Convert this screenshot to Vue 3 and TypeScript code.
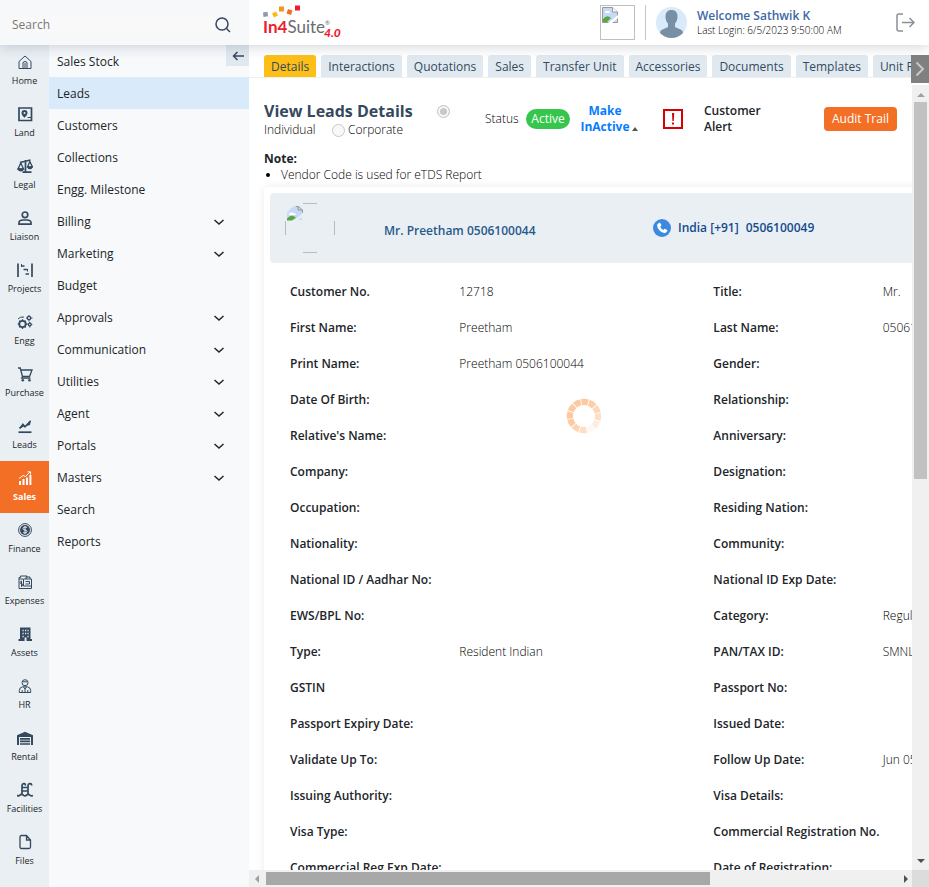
<script setup lang="ts">
import { ref } from 'vue'

interface RailItem { name: string; icon: string }
interface MenuItem { name: string; children?: boolean }
interface Field { label: string; value?: string }

const modules: RailItem[] = [
  { name: 'Home', icon: '<path class="l" d="M2 7.500 8 2l6 5.500V14.500H2zM6 14.500V9q0-1.500 2-1.500T10 9v5.500M8 9v5"/>' },
  { name: 'Land', icon: '<path class="l w" d="M2 2h12.500v12.500H2z"/><path d="M7.500 4a3 3 0 0 1 3 3c0 2-3 4.800-3 4.800S4.500 9 4.500 7a3 3 0 0 1 3-3z"/><circle cx="7.500" cy="6.900" r="1" fill="#e9eff3"/><path class="l" d="M10.500 11.500H14"/>' },
  { name: 'Legal', icon: '<path class="l w" d="M3 4.500 13.500 2M8.500 2v12M5.500 14.200h9"/><path class="l m" d="M3.800 5 1 11h5.600zM12.800 3.500l-2.300 5.500h5z"/><path d="M.5 10.500h6.600q-.6 3-3.300 3T.5 10.500zM10 8.500h5.800q-.5 2.700-2.900 2.700T10 8.500z"/>' },
  { name: 'Liaison', icon: '<circle class="l w" cx="8" cy="4.800" r="2.800"/><path class="l w" d="M2 14.200v-1.500q0-2.700 4-2.700h4q4 0 4 2.700v1.500z"/>' },
  { name: 'Projects', icon: '<path class="l w" d="M1 1.500v13.500M15 1.500v13.500M4 4h3.500M6.500 7.500h4M8.500 12h3.500"/><path class="l" d="M4.500 2v3M10.500 7v2.500"/>' },
  { name: 'Engg', icon: '<circle class="l w" cx="5.500" cy="10" r="3.200"/><path class="l m" d="M5.500 5.300v1.500M5.500 13v2M.8 10h1.700M8.500 10h2M2.200 6.700l1.100 1.200M7.600 12.200l1.200 1.200M2.200 13.300l1.100-1.200M7.600 7.800l1.200-1.100"/><path class="l" d="M1 5q2-2.500 6-2"/><circle class="l m" cx="12" cy="4" r="1.700"/><circle class="l m" cx="12.800" cy="10.500" r="1.400"/><path class="l" d="M12 1v1M12 6v1.500M9 4h1M14 4h1.500M12.800 8v1M12.800 12v1.500M10.800 10.500h.8M14.300 10.500h1"/>' },
  { name: 'Purchase', icon: '<path class="l m" d="M1 2h2.200l2.300 8.500h7L15 4H4M5.500 10.500l-.8 1.700h8.800"/><circle cx="5.800" cy="14.200" r="1.300"/><circle cx="12.400" cy="14.200" r="1.300"/>' },
  { name: 'Leads', icon: '<path class="l w" d="M1.500 14.200h13"/><path class="l w" d="M2.500 10.500 6 6.500l2 2.300L13.500 3"/><path d="M5.500 5.200 7.500 8l-4 2.500zM9.500 8l4.500-6-1 5z"/>' },
  { name: 'Sales', icon: '<path d="M2 11h2v4H2zM5.500 9h2v6h-2zM9 7.500h2V15H9zM12.400 5h2v10h-2z"/><path class="l" d="M2 8.500 6 5.500l2.500 1L13 2M10.500 1.800h3v2.700"/>' },
  { name: 'Finance', icon: '<circle class="l" cx="8" cy="8" r="6.400"/><circle cx="8" cy="8" r="5"/><path d="M10 5.800Q9.500 5 8 5 6 5 6 6.500T8 8t2 1.500T8 11q-1.500 0-2-.8M8 4v8" fill="none" stroke="#e9eff3"/>' },
  { name: 'Expenses', icon: '<path class="l" d="M2 3.500h1.500V2H10v1.500M2 3.500v11h12.500V12M2 5h4M6.500 5h8v7h-8zM9 5V3h4v2M4.500 7.500q-1.500 0-1.500 1t1.500 1.200Q6 10 6 11t-1.500 1M4.500 6.800v6M8.500 7.500h4v2.500h-4"/>' },
  { name: 'Assets', icon: '<path d="M3 1.500h10.500v11.500H15v2H1.500v-2H3z"/><path d="M5.500 3.700h1.200v1.500H5.500zM8 3.700h1.200v1.500H8zM10.400 3.700h1.200v1.500h-1.200zM5.500 6.700h1.200v1.500H5.500zM8 6.700h1.200v1.500H8zM10.400 6.700h1.200v1.500h-1.200zM5.500 9.700h1.200v1.500H5.500zM10.400 9.700h1.200v1.500h-1.200zM7.600 11.500h1.900V15H7.600z" fill="#e9eff3"/>' },
  { name: 'HR', icon: '<circle class="l" cx="8" cy="4.700" r="3"/><path class="l" d="M2.300 14.500v-2q0-3 3.200-3.700h5q3.200.7 3.200 3.700v2zM5.200 14v-2M10.800 14v-2M6.500 9 8 11l1.500-2M8 11v3M6 3.800h4"/>' },
  { name: 'Rental', icon: '<path d="M0 5.200 8 1.700l8 3.500V15h-2V7H2v8H0z"/><path class="l w" d="M3 8.800h10M3 11.400h10M3 14h10"/>' },
  { name: 'Facilities', icon: '<path class="l w" d="M5 12V4q0-2.300 2-2.300T8 3.500M11 12V4q0-2.300 2-2.300T14.500 3.500M5 5.500h6M5 9h6"/><path class="l w" d="M0 13.200q1.500 1.500 3 0t3.300 0 3.300 0 3.300 0 3 0"/>' },
  { name: 'Files', icon: '<path class="l m" d="M3 3q0-1.500 1.500-1.500h5L13.500 6v7q0 1.500-1.500 1.500H4.500Q3 14.500 3 13zM9.500 1.500V6h4"/>' },
]

const menu: MenuItem[] = [
  { name: 'Sales Stock' }, { name: 'Leads' }, { name: 'Customers' }, { name: 'Collections' },
  { name: 'Engg. Milestone' }, { name: 'Billing', children: true }, { name: 'Marketing', children: true },
  { name: 'Budget' }, { name: 'Approvals', children: true }, { name: 'Communication', children: true },
  { name: 'Utilities', children: true }, { name: 'Agent', children: true }, { name: 'Portals', children: true },
  { name: 'Masters', children: true }, { name: 'Search' }, { name: 'Reports' },
]

const tabs: string[] = ['Details', 'Interactions', 'Quotations', 'Sales', 'Transfer Unit', 'Accessories', 'Documents', 'Templates', 'Unit Rate']

const fields: Field[] = [
  { label: 'Customer No.', value: '12718' }, { label: 'Title:', value: 'Mr.' },
  { label: 'First Name:', value: 'Preetham' }, { label: 'Last Name:', value: '0506100044' },
  { label: 'Print Name:', value: 'Preetham 0506100044' }, { label: 'Gender:' },
  { label: 'Date Of Birth:' }, { label: 'Relationship:' },
  { label: "Relative's Name:" }, { label: 'Anniversary:' },
  { label: 'Company:' }, { label: 'Designation:' },
  { label: 'Occupation:' }, { label: 'Residing Nation:' },
  { label: 'Nationality:' }, { label: 'Community:' },
  { label: 'National ID / Aadhar No:' }, { label: 'National ID Exp Date:' },
  { label: 'EWS/BPL No:' }, { label: 'Category:', value: 'Regular' },
  { label: 'Type:', value: 'Resident Indian' }, { label: 'PAN/TAX ID:', value: 'SMNL' },
  { label: 'GSTIN' }, { label: 'Passport No:' },
  { label: 'Passport Expiry Date:' }, { label: 'Issued Date:' },
  { label: 'Validate Up To:' }, { label: 'Follow Up Date:', value: 'Jun 05' },
  { label: 'Issuing Authority:' }, { label: 'Visa Details:' },
  { label: 'Visa Type:' }, { label: 'Commercial Registration No.' },
  { label: 'Commercial Reg Exp Date:' }, { label: 'Date of Registration:' },
]

const activeModule = ref('Sales')
const activeMenu = ref('Leads')
const activeTab = ref('Details')
const leadType = ref('individual')
const segments = [0.15, 0.6, 0.8, 1, 1, 1, 1, 1, 0.9, 0.75, 0.6, 0.35].map((opacity, i) => ({
  angle: i * 30 + 50,
  opacity,
}))
</script>

<template>
  <div class="app">
    <header class="topbar">
      <div class="search">
        <input type="text" placeholder="Search" aria-label="Search" />
        <button type="button" aria-label="Run search">
          <svg width="16" height="16" viewBox="0 0 16 16"><circle cx="7" cy="7" r="6" /><path d="m11.500 11.500 3.500 3.500" /></svg>
        </button>
      </div>
      <div class="brandbar">
        <a class="logo" href="#">
          <svg width="60" height="14" viewBox="0 0 60 14">
            <path fill="#8d99ae" d="m0 7.500 4.500-.7.500 4.500-4.500.7z" />
            <path fill="#fdb913" d="m9 8.500 4-2 2 4-4 2z" />
            <path fill="#f7941d" d="M16 1.500h5v5h-5z" />
            <path fill="#f36f21" d="m25 4 4.500 1.500L28 10l-4.500-1.500z" />
            <path fill="#ee1c2e" d="M32 .5h5v5h-5z" />
          </svg>
          <span class="logo-text"><b>In4</b>Suite<sup>®</sup><em>4.0</em></span>
        </a>
        <div class="user">
          <span class="company-pic">
            <svg width="16" height="16" viewBox="0 0 16 16"><path fill="#c6d9f5" stroke="#999" d="M.5.500h10L15.500 5v10.500H.5z" /><path fill="#fff" stroke="#999" d="M10.500.5V5h5" /><path fill="#fff" d="M3 5q1-2 3-1 2 .2 2 2H3z" /><path fill="#57a83a" d="M1 15V12q4-5 8-1l-4 4z" /><path fill="#fff" d="m6 16 10-8v3l-6 5z" /></svg>
          </span>
          <span class="rule"></span>
          <svg class="avatar" width="31" height="31" viewBox="0 0 31 31"><circle cx="15.500" cy="15.500" r="15.500" fill="#d9eafb" /><path fill="#7890a4" d="M15.500 3c4 0 6 2.500 6 6.500 0 3-1 5.500-2.500 7v3.500l6.500 3q1.500.8 1.500 3Q22 31 15.500 31T4 26q0-2.200 1.500-3l6.500-3v-3.500c-1.500-1.500-2.500-4-2.500-7 0-4 2-6.500 6-6.500z" /></svg>
          <div class="welcome">
            <strong>Welcome Sathwik K</strong>
            <span>Last Login: 6/5/2023 9:50:00 AM</span>
          </div>
          <button class="logout" type="button" aria-label="Log out">
            <svg width="20" height="20" viewBox="0 0 20 20"><path d="M8 1H4Q2 1 2 3v13q0 2 2 2h4M7 9.500h12M14.500 5 19 9.500 14.500 14" /></svg>
          </button>
        </div>
      </div>
    </header>

    <div class="body">
      <nav class="rail" aria-label="Modules">
        <a v-for="m in modules" :key="m.name" href="#" :class="{ on: m.name === activeModule }" @click.prevent="activeModule = m.name">
          <svg width="16" height="16" viewBox="0 0 16 16" v-html="m.icon"></svg>
          <span>{{ m.name }}</span>
        </a>
      </nav>

      <nav class="menu" aria-label="Sales menu">
        <button class="collapse" type="button" aria-label="Collapse menu">
          <svg width="12" height="10" viewBox="0 0 12 10"><path d="M12 5H1.500M5.500 1l-4 4 4 4" /></svg>
        </button>
        <a v-for="m in menu" :key="m.name" href="#" :class="{ on: m.name === activeMenu }" @click.prevent="activeMenu = m.name">
          {{ m.name }}
          <svg v-if="m.children" width="10" height="7" viewBox="0 0 10 7"><path d="m.5 1 4.500 4 4.500-4" /></svg>
        </a>
      </nav>

      <main class="main">
        <div class="tabrow">
          <div class="tabs" role="tablist">
            <button v-for="t in tabs" :key="t" type="button" role="tab" :aria-selected="t === activeTab" :class="{ on: t === activeTab }" @click="activeTab = t">{{ t }}</button>
          </div>
          <button class="next" type="button" aria-label="More tabs">
            <svg width="10" height="16" viewBox="0 0 10 16"><path d="m1.500 1.500 6.500 6.500-6.500 6.500" /></svg>
          </button>
        </div>

        <div class="pane">
          <div class="view">
            <div class="headrow">
              <fieldset class="kind">
                <h1>View Leads Details</h1>
                <input id="individual" v-model="leadType" type="radio" name="kind" value="individual" />
                <label for="individual">Individual</label>
                <span class="corp">
                  <input id="corporate" v-model="leadType" type="radio" name="kind" value="corporate" />
                  <label for="corporate">Corporate</label>
                </span>
              </fieldset>
              <span class="status">Status</span>
              <span class="pill">Active</span>
              <a class="toggle" href="#">Make<br />InActive <i></i></a>
              <svg class="alert" width="20" height="20" viewBox="0 0 20 20"><path fill="#fff" stroke="#d80000" stroke-width="2" d="M1 1h18v18H1z" /><path fill="#d80000" d="M9 4h2.200l-.4 8H9.400zM9 13.500h2v2H9z" /></svg>
              <strong class="custalert">Customer<br />Alert</strong>
              <button class="audit" type="button">Audit Trail</button>
            </div>

            <div class="note">
              <strong>Note:</strong>
              <ul><li>Vendor Code is used for eTDS Report</li></ul>
            </div>

            <section class="card">
              <div class="banner">
                <span class="photo">
                  <svg width="50" height="50" viewBox="0 0 50 50"><path fill="none" stroke="#bbb" d="M18 .5h14M18 49.500h14M.5 18v14M49.500 18v14" /><path fill="#c6d9f5" d="M2 17V10q2-4 7-7h4l4 4v10z" /><path fill="#fff" d="M4 11q2-3 4-1 3 0 3 2H4z" /><path fill="none" stroke="#999" d="M11 3.500h2.500L17.500 7v3M13 3.500V7h4.500" /><path fill="#57a83a" d="M2 17.500v-2q4-5 9-1l-4 3z" /><path fill="#eaeff3" d="m8 18 9-7v3l-5 4z" /></svg>
                </span>
                <strong class="who">Mr. Preetham 0506100044</strong>
                <a class="phone" href="#">
                  <svg width="18" height="18" viewBox="0 0 18 18"><circle cx="9" cy="9" r="9" fill="#3b8ae0" /><path fill="#fff" d="M4.500 5.200 6.200 3.800q.6-.3 1 .3l1.100 1.900q.3.600-.2 1l-.9.800q1 2.400 3.200 3.300l.9-1q.4-.4 1-.1l1.800 1q.6.400.2 1l-1.200 1.600q-.8.700-2 .4-6-1.600-7-7.300-.1-.9.400-1.500z" /></svg>
                  <span>India [+91]</span><span>0506100049</span>
                </a>
              </div>
              <dl class="fields">
                <template v-for="f in fields" :key="f.label">
                  <dt>{{ f.label }}</dt>
                  <dd>{{ f.value }}</dd>
                </template>
              </dl>
            </section>
          </div>

          <div class="bar vertical" aria-hidden="true"><i class="up"></i><span></span><i class="down"></i></div>
          <div class="bar horizontal" aria-hidden="true"><i class="left"></i><span></span><i class="right"></i></div>
          <div class="corner"></div>

          <svg class="spinner" width="36" height="36" viewBox="-18 -18 36 36" role="img" aria-label="Loading">
            <path v-for="s in segments" :key="s.angle" :transform="`rotate(${s.angle})`" :opacity="s.opacity" d="M17.200 0A17.200 17.200 0 0 1 15.400 7.700L9.800 4.900A11 11 0 0 0 11 0z" />
          </svg>
        </div>
      </main>
    </div>
  </div>
</template>

<style>
body {
  margin: 0;
}
</style>

<style scoped>
.app {
  display: flex;
  flex-direction: column;
  height: 100vh;
  overflow: hidden;
  background: #fff;
  color: #212529;
  font: 12px/16px "Open Sans", "Noto Sans", sans-serif;
}
.app * {
  box-sizing: border-box;
}
button,
input {
  font: inherit;
  color: inherit;
}
button {
  padding: 0;
  border: 0;
  background: none;
}
a {
  color: inherit;
  text-decoration: none;
}
svg {
  display: block;
  flex: none;
  fill: none;
}

/* Top bar */
.topbar {
  position: relative;
  z-index: 2;
  display: flex;
  flex: none;
  height: 45px;
  box-shadow: 0 2px 12px rgba(50, 70, 95, 0.22);
}
.search {
  display: flex;
  align-items: center;
  width: 249px;
  padding: 4px 18px 0 12px;
  background: #f7f8fa;
}
.search input {
  flex: 1;
  min-width: 0;
  padding: 0;
  border: 0;
  outline: 0;
  background: #f9f9f9;
}
.search input::placeholder {
  color: #777;
}
.search svg {
  stroke: #34495e;
  stroke-width: 1.5;
}
.brandbar {
  display: flex;
  flex: 1;
  justify-content: space-between;
  padding: 0 14px;
  background: #fff;
}
.logo {
  padding-top: 5px;
}
.logo-text {
  display: flex;
  align-items: center;
  height: 16px;
  color: #6a6c70;
  font: 17px/16px Lato, sans-serif;
}
.logo-text b {
  color: #ee1c2e;
}
.logo-text sup {
  align-self: flex-start;
  font-size: 6px;
  line-height: 8px;
}
.logo-text em {
  align-self: flex-end;
  margin-bottom: -6px;
  margin-left: -6px;
  color: #ee1c2e;
  font-size: 12px;
  font-weight: 900;
}
.user {
  display: flex;
  align-items: center;
}
.company-pic {
  width: 35px;
  height: 35px;
  padding: 1px;
  border: 1px solid #c0c0c0;
}
.rule {
  width: 1px;
  height: 35px;
  margin: 0 10px;
  background: #c4c4c4;
}
.welcome {
  display: flex;
  flex-direction: column;
  width: 208px;
  padding: 1px 0 0 10px;
  font-size: 10px;
  line-height: 14px;
  white-space: nowrap;
}
.welcome strong {
  color: #3d68a5;
  font-size: 12px;
  font-weight: 600;
}
.welcome span {
  color: #000;
  font-weight: 300;
}
.logout svg {
  stroke: #8a8f98;
  stroke-width: 1.5;
}

/* Side navigation */
.body {
  display: flex;
  flex: 1;
  min-height: 0;
}
.rail {
  flex: none;
  width: 49px;
  background: #e9eff3;
  overflow: hidden;
}
.rail a {
  display: flex;
  flex-direction: column;
  align-items: center;
  gap: 3px;
  height: 52px;
  padding-top: 9px;
  font-size: 9px;
  font-weight: 500;
  line-height: 16px;
}
.rail svg {
  fill: #34495e;
  color: #34495e;
}
.rail svg :deep(.l) {
  fill: none;
  stroke: currentColor;
  stroke-width: 1;
}
.rail svg :deep(.m) {
  stroke-width: 1.3;
}
.rail svg :deep(.w) {
  stroke-width: 1.7;
}
.rail .on {
  background: #f36f26;
  color: #fff;
  font-weight: 700;
}
.rail .on svg {
  fill: #fff;
  color: #fff;
}
.menu {
  position: relative;
  flex: none;
  width: 200px;
  background: #f7f9fb;
}
.menu a {
  display: flex;
  align-items: center;
  justify-content: space-between;
  height: 32px;
  padding: 2px 25px 0 8px;
}
.menu a.on {
  background: #d9eafb;
}
.menu a svg {
  stroke: #212529;
  stroke-width: 1.5;
}
.collapse {
  position: absolute;
  top: 0;
  right: 0;
  display: grid;
  place-items: center;
  width: 23px;
  height: 21px;
  background: #e1e9f0;
}
.collapse svg {
  stroke: #34495e;
  stroke-width: 1.5;
}

/* Tabs */
.main {
  display: flex;
  flex: 1;
  flex-direction: column;
  min-width: 0;
}
.tabrow {
  display: flex;
  flex: none;
  height: 40px;
  padding-top: 10px;
}
.tabs {
  display: flex;
  flex: 1;
  gap: 5px;
  height: 23px;
  min-width: 0;
  padding-left: 15px;
  border-bottom: 1px solid #eef0f2;
  overflow: hidden;
}
.tabs button {
  flex: none;
  padding: 2px 7px 0;
  border-radius: 3px 3px 0 0;
  background: #e1e9f0;
  color: #34495e;
}
.tabs .on {
  background: #fdbf17;
}
.next {
  display: grid;
  place-items: center;
  width: 18px;
  height: 28px;
  background: #808080;
}
.next svg {
  stroke: #c8c8c8;
  stroke-width: 2;
}

/* Scrolled pane */
.pane {
  position: relative;
  display: grid;
  flex: 1;
  grid-template-rows: minmax(0, 1fr) 17px;
  grid-template-columns: minmax(0, 1fr) 17px;
  min-height: 0;
}
.view {
  padding: 16px 0 0 15px;
  overflow: hidden;
}
.headrow {
  display: flex;
  align-items: center;
  height: 36px;
  padding-right: 15px;
}
.kind {
  display: grid;
  grid-template-columns: 68px 1fr 14px;
  align-items: center;
  width: 187px;
  margin: 0;
  padding: 0;
  border: 0;
}
.kind h1 {
  grid-column: 1 / 3;
  margin: 0;
  color: #34495e;
  font-size: 16px;
  font-weight: 700;
  line-height: 22px;
  white-space: nowrap;
}
.kind input {
  display: block;
  width: 13px;
  height: 13px;
  margin: 0;
  border: 1px solid #c8c8c8;
  border-radius: 50%;
  background: #f8f8f8;
  appearance: none;
}
.kind > input {
  align-self: center;
}
.kind input:checked {
  background: #c8c8c8;
  box-shadow: inset 0 0 0 2px #f8f8f8;
}
.kind label,
.status {
  color: #000;
  font-weight: 300;
}
.corp {
  display: flex;
  gap: 3px;
  align-items: center;
}
.status {
  width: 41px;
  margin-left: 34px;
}
.pill {
  width: 44px;
  border-radius: 10px;
  background: #35c64b;
  color: #fff;
  line-height: 20px;
  text-align: center;
}
.toggle {
  width: 58px;
  margin-left: 10px;
  padding-right: 8px;
  color: #087cff;
  font-weight: 700;
  text-align: center;
  white-space: nowrap;
}
.toggle i {
  position: absolute;
  margin: 8px 0 0 2px;
  border: 3px solid transparent;
  border-top: 0;
  border-bottom: 4px solid #555;
}
.alert {
  margin: 0 21px 0 25px;
}
.custalert {
  font-weight: 600;
}
.audit {
  width: 73px;
  height: 24px;
  margin-left: auto;
  border-radius: 4px;
  background: #f36f26;
  color: #fff;
}
.note {
  padding: 14px 0 4px;
}
.note strong {
  font-weight: 700;
}
.note ul {
  margin: 0;
  padding-left: 17px;
  color: #000;
  font-weight: 300;
}
.card {
  width: 139%;
  padding: 6px;
  border-radius: 4px;
  box-shadow: 0 0 10px rgba(0, 0, 0, 0.08);
}
.banner {
  display: flex;
  height: 70px;
  padding: 10px 15px;
  border-radius: 4px;
  background: #eaeff3;
  color: #28598c;
  font-weight: 600;
}
.who {
  width: 269px;
  margin-left: 49px;
  padding-top: 20px;
  font-weight: 600;
}
.phone {
  display: flex;
  gap: 7px;
  align-items: center;
  height: 50px;
  color: #134b8e;
}
.fields {
  display: grid;
  grid-template-columns: 2fr 3fr 2fr 3fr;
  margin: 11px 22px 11px 20px;
  line-height: 36px;
  white-space: nowrap;
}
.fields dt {
  min-width: 0;
  font-weight: 600;
}
.fields dd {
  min-width: 0;
  margin: 0;
  color: #000;
  font-weight: 300;
}

/* Scroll bars */
.bar {
  display: flex;
  align-items: center;
  background: #f0f0f0;
}
.vertical {
  flex-direction: column;
}
.bar i {
  flex: none;
  border: 4px solid transparent;
}
.vertical span {
  width: 13px;
  height: 48%;
  background: #c1c1c1;
}
.horizontal span {
  width: 67%;
  height: 13px;
  background: #a8a8a8;
}
.bar .up {
  margin: 8px 0 5px;
  border-top-width: 0;
  border-bottom-color: #a0a0a0;
}
.bar .down {
  margin: auto 0 7px;
  border-top-color: #505050;
  border-bottom-width: 0;
}
.bar .left {
  margin: 0 7px 0 6px;
  border-right-color: #a0a0a0;
  border-left-width: 0;
}
.bar .right {
  margin: 0 4px 0 auto;
  border-left-color: #505050;
  border-right-width: 0;
}
.corner {
  background: #dcdcdc;
}
.spinner {
  position: absolute;
  top: 39%;
  left: calc(47% - 3px);
  fill: #fdc9a0;
}
</style>
